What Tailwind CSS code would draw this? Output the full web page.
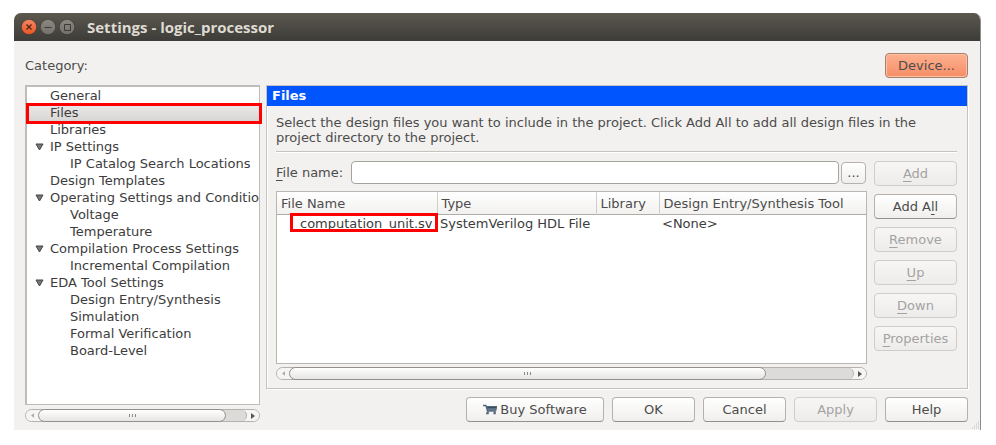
<!DOCTYPE html>
<html lang="en">
<head>
<meta charset="utf-8">
<meta name="viewport" content="width=device-width, initial-scale=1">
<title>Settings - logic_processor</title>
<script src="https://cdn.jsdelivr.net/npm/@tailwindcss/browser@4"></script>
</head>
<body class="bg-white pt-[13px] pr-[15px] pl-[14px] pb-4 font-['DejaVu_Sans',sans-serif] text-[13px] leading-[17px] text-[#4c4c4c]">
<main class="relative overflow-hidden rounded-t-[7px] border-r border-[#8f8d8a] bg-[#f2f1ef]">
  <header class="flex h-7 items-center gap-[3px] bg-linear-to-b from-[#5b584f] to-[#3d3c38] pl-[7px]">
    <button aria-label="Close" class="size-4"><svg viewBox="0 0 16 16" class="size-4"><defs><linearGradient id="c" x2="0" y2="1"><stop stop-color="#f58766"/><stop offset="1" stop-color="#ea5523"/></linearGradient></defs><circle cx="8" cy="8" r="7.6" fill="url(#c)" stroke="#38352f" stroke-width=".5"/><path d="M5.500 5.500l5 5M10.500 5.500l-5 5" stroke="#4a2415" stroke-width="1.2"/></svg></button>
    <button aria-label="Minimize" class="size-4"><svg viewBox="0 0 16 16" class="size-4"><defs><linearGradient id="g" x2="0" y2="1"><stop stop-color="#8b8880"/><stop offset="1" stop-color="#73716b"/></linearGradient></defs><circle cx="8" cy="8" r="7.6" fill="url(#g)" stroke="#38352f" stroke-width=".5"/><path d="M4.500 8.500h7" stroke="#3b3935"/></svg></button>
    <button aria-label="Maximize" class="size-4"><svg viewBox="0 0 16 16" class="size-4"><circle cx="8" cy="8" r="7.6" fill="url(#g)" stroke="#38352f" stroke-width=".5"/><path d="M5.500 5.500h6v6h-6z" fill="none" stroke="#3b3935"/></svg></button>
    <h1 class="ml-[9px] font-['Open_Sans',sans-serif] text-[15px] font-bold text-[#dfdbd2]">Settings - logic_processor</h1>
  </header>

  <div class="pt-3 pr-3 pb-2 pl-[11px]">
    <div class="flex items-center justify-between">
      <h2 id="category">Category:</h2>
      <button class="h-[25px] w-[83px] rounded border border-[#a5806f] bg-linear-to-b from-[#fdb08f] to-[#f58e66] shadow-[inset_0_0_0_1px_#ffc1a6]">Device...</button>
    </div>

    <div class="mt-[7px] flex gap-[6px]">
      <nav aria-labelledby="category" class="flex w-[235px] shrink-0 flex-col">
        <div class="relative flex flex-1 flex-col">
          <ul class="flex-1 overflow-hidden border-2 border-r border-b border-[#bfbdba] bg-white whitespace-nowrap text-[#3c3c3c]">
            <li class="pl-[23px]">General</li>
            <li class="bg-linear-to-b from-[#ecebea] to-[#d8d6d4] pl-[23px]" aria-current="true">Files</li>
            <li class="pl-[23px]">Libraries</li>
            <li><div class="flex items-center pl-2"><svg viewBox="0 0 9 8" class="mr-[6px] h-2 w-[9px]"><path d="M1 1h7L4.500 7z" fill="#777" stroke="#444"/></svg>IP Settings</div>
              <ul><li class="pl-[43px]">IP Catalog Search Locations</li></ul></li>
            <li class="pl-[23px]">Design Templates</li>
            <li><div class="flex items-center pl-2"><svg viewBox="0 0 9 8" class="mr-[6px] h-2 w-[9px] shrink-0"><path d="M1 1h7L4.500 7z" fill="#777" stroke="#444"/></svg>Operating Settings and Conditions</div>
              <ul><li class="pl-[43px]">Voltage</li><li class="pl-[43px]">Temperature</li></ul></li>
            <li><div class="flex items-center pl-2"><svg viewBox="0 0 9 8" class="mr-[6px] h-2 w-[9px]"><path d="M1 1h7L4.500 7z" fill="#777" stroke="#444"/></svg>Compilation Process Settings</div>
              <ul><li class="pl-[43px]">Incremental Compilation</li></ul></li>
            <li><div class="flex items-center pl-2"><svg viewBox="0 0 9 8" class="mr-[6px] h-2 w-[9px]"><path d="M1 1h7L4.500 7z" fill="#777" stroke="#444"/></svg>EDA Tool Settings</div>
              <ul><li class="pl-[43px]">Design Entry/Synthesis</li><li class="pl-[43px]">Simulation</li><li class="pl-[43px]">Formal Verification</li><li class="pl-[43px]">Board-Level</li></ul></li>
          </ul>
          <div class="absolute top-[18px] -right-[2px] left-px h-[21px] border-3 border-[#f00]"></div>
        </div>
        <div class="mt-1 flex h-[13px] rounded-full border border-[#b5b2ae] bg-[#dcdbd9]">
          <button aria-label="Scroll left" class="-mr-2 flex w-5 items-center rounded-l-full bg-[#f6f5f4] pl-[5px]"><svg viewBox="0 0 4 6" class="h-[5px] w-[3px]"><path d="M4 0v6L0 3z" fill="#aaa"/></svg></button>
          <div class="-my-px flex w-[188px] items-center justify-center gap-[2px] rounded-full border border-[#93908c] bg-linear-to-b from-white to-[#e6e5e3]"><i class="h-[3px] w-px bg-[#888]"></i><i class="h-[3px] w-px bg-[#888]"></i><i class="h-[3px] w-px bg-[#888]"></i></div>
          <div class="flex-1 rounded-r-full border-r border-[#b5b2ae] bg-[#dcdbd9] shadow-[6px_0_0_#f6f5f4]"></div>
          <button aria-label="Scroll right" class="flex w-3 items-center justify-center rounded-r-full bg-[#f6f5f4]"><svg viewBox="0 0 4 6" class="h-[6px] w-1"><path d="M0 0v6l4-3z" fill="#555"/></svg></button>
        </div>
      </nav>

      <div class="min-w-0 flex-1">
        <section class="border border-[#c5c3c0] pb-2 shadow-[1px_1px_0_#fff,inset_1px_0_0_#fff]">
          <h2 class="h-5 bg-[#0055ff] pl-[5px] text-[13px] leading-5 font-bold text-white">Files</h2>
          <div class="pr-[10px] pl-[9px]">
            <p class="border-b border-[#c5c3c0] pt-[9px] pb-[6px] leading-[15px] shadow-[0_1px_0_#fff]">Select the design files you want to include in the project. Click Add All to add all design files in the project directory to the project.</p>
            <div class="mt-[9px] flex gap-[7px]">
              <div class="min-w-0 flex-1">
                <div class="flex items-center">
                  <label for="filename" class="w-[75px] shrink-0"><u class="underline-offset-3">F</u>ile name:</label>
                  <input id="filename" class="h-[23px] min-w-0 flex-1 rounded border border-[#a6a39e] bg-white px-2">
                  <button aria-label="Browse" class="mr-px ml-[2px] h-[22px] w-[25px] rounded border border-[#b5b2ae] bg-linear-to-b from-white to-[#f0efed]">...</button>
                </div>
                <div class="relative mt-[7px] min-h-[173px] border border-[#b9b6b2] bg-white">
                  <table class="w-full table-fixed text-left whitespace-nowrap">
                    <colgroup><col class="w-[160px]"><col class="w-[159px]"><col class="w-[63px]"><col></colgroup>
                    <thead class="bg-linear-to-b from-white to-[#f2f1ef]"><tr class="h-[22px] border-b border-[#b0ada9]">
                      <th class="border-r border-[#d0cecb] pt-px pl-1 font-normal">File Name</th><th class="border-r border-[#d0cecb] pt-px pl-1 font-normal">Type</th><th class="border-r border-[#d0cecb] pt-px pl-1 font-normal">Library</th><th class="pt-px pl-1 font-normal">Design Entry/Synthesis Tool</th></tr></thead>
                    <tbody class="text-[#3c3c3c]"><tr><td class="pl-[23px]">computation_unit.sv</td><td class="pl-[3px]">SystemVerilog HDL File</td><td></td><td class="pl-[3px]">&lt;None&gt;</td></tr></tbody>
                  </table>
                  <div class="absolute top-[21px] left-[13px] h-[19px] w-[148px] border-3 border-[#f00]"></div>
                </div>
                <div class="mt-[3px] flex h-[13px] rounded-full border border-[#b5b2ae] bg-[#dcdbd9]">
                  <button aria-label="Scroll left" class="-mr-2 flex w-5 items-center rounded-l-full bg-[#f6f5f4] pl-[5px]"><svg viewBox="0 0 4 6" class="h-[5px] w-[3px]"><path d="M4 0v6L0 3z" fill="#aaa"/></svg></button>
                  <div class="-my-px flex w-[477px] items-center justify-center gap-[2px] rounded-full border border-[#93908c] bg-linear-to-b from-white to-[#e6e5e3]"><i class="h-[3px] w-px bg-[#888]"></i><i class="h-[3px] w-px bg-[#888]"></i><i class="h-[3px] w-px bg-[#888]"></i></div>
                  <div class="flex-1 rounded-r-full border-r border-[#b5b2ae] bg-[#dcdbd9] shadow-[6px_0_0_#f6f5f4]"></div>
                  <button aria-label="Scroll right" class="flex w-3 items-center justify-center rounded-r-full bg-[#f6f5f4]"><svg viewBox="0 0 4 6" class="h-[6px] w-1"><path d="M0 0v6l4-3z" fill="#555"/></svg></button>
                </div>
              </div>
              <div class="flex w-[83px] flex-col gap-2">
                <button disabled class="h-[25px] rounded border border-[#cfcdca] bg-linear-to-b from-[#f7f6f5] to-[#eeecea] text-[#a3a3a3]"><u class="underline-offset-3">A</u>dd</button>
                <button class="h-[25px] rounded border border-[#b5b2ae] border-b-[#93908c] bg-linear-to-b from-white to-[#f0efed]">Add A<u class="underline-offset-3">l</u>l</button>
                <button disabled class="h-[25px] rounded border border-[#cfcdca] bg-linear-to-b from-[#f7f6f5] to-[#eeecea] text-[#a3a3a3]"><u class="underline-offset-3">R</u>emove</button>
                <button disabled class="h-[25px] rounded border border-[#cfcdca] bg-linear-to-b from-[#f7f6f5] to-[#eeecea] text-[#a3a3a3]"><u class="underline-offset-3">U</u>p</button>
                <button disabled class="h-[25px] rounded border border-[#cfcdca] bg-linear-to-b from-[#f7f6f5] to-[#eeecea] text-[#a3a3a3]"><u class="underline-offset-3">D</u>own</button>
                <button disabled class="h-[25px] rounded border border-[#cfcdca] bg-linear-to-b from-[#f7f6f5] to-[#eeecea] text-[#a3a3a3]"><u class="underline-offset-3">P</u>roperties</button>
              </div>
            </div>
          </div>
        </section>
        <div class="mt-2 flex justify-end gap-2">
          <button class="flex h-[25px] w-[138px] items-center justify-center gap-[3px] rounded border border-[#b5b2ae] border-b-[#93908c] bg-linear-to-b from-white to-[#f0efed]"><svg viewBox="0 0 14 12" class="h-3 w-[14px]"><path d="M0 .8h3.200l.8 1.200H14v2L13 7.800H4L2.400 2.200H0z" fill="#53677d"/><path d="M3.800 7.500h2v2.700h-3zM10.800 7.500h2v2.700h-2.500z" fill="#53677d"/><path d="M4.500 3.500h8.500" stroke="#34465a" stroke-width=".8"/><path d="M6 4.500v3M8 4.500v3M10 4.500v3M12 4.500v3" stroke="#94a3b2" stroke-width=".5"/></svg>Buy Software</button>
          <button class="h-[25px] w-[83px] rounded border border-[#b5b2ae] border-b-[#93908c] bg-linear-to-b from-white to-[#f0efed]">OK</button>
          <button class="h-[25px] w-[83px] rounded border border-[#b5b2ae] border-b-[#93908c] bg-linear-to-b from-white to-[#f0efed]">Cancel</button>
          <button disabled class="h-[25px] w-[83px] rounded border border-[#cfcdca] bg-linear-to-b from-[#f7f6f5] to-[#eeecea] text-[#a3a3a3]">Apply</button>
          <button class="h-[25px] w-[83px] rounded border border-[#b5b2ae] border-b-[#93908c] bg-linear-to-b from-white to-[#f0efed]">Help</button>
        </div>
      </div>
    </div>
  </div>
  <svg viewBox="0 0 9 9" class="absolute right-0 bottom-0 size-[9px]"><path d="M7 1h1M5 3h1M7 3h1M3 5h1M5 5h1M7 5h1M1 7h1M3 7h1M5 7h1M7 7h1" stroke="#c2c0bd"/></svg>
</main>
</body>
</html>
